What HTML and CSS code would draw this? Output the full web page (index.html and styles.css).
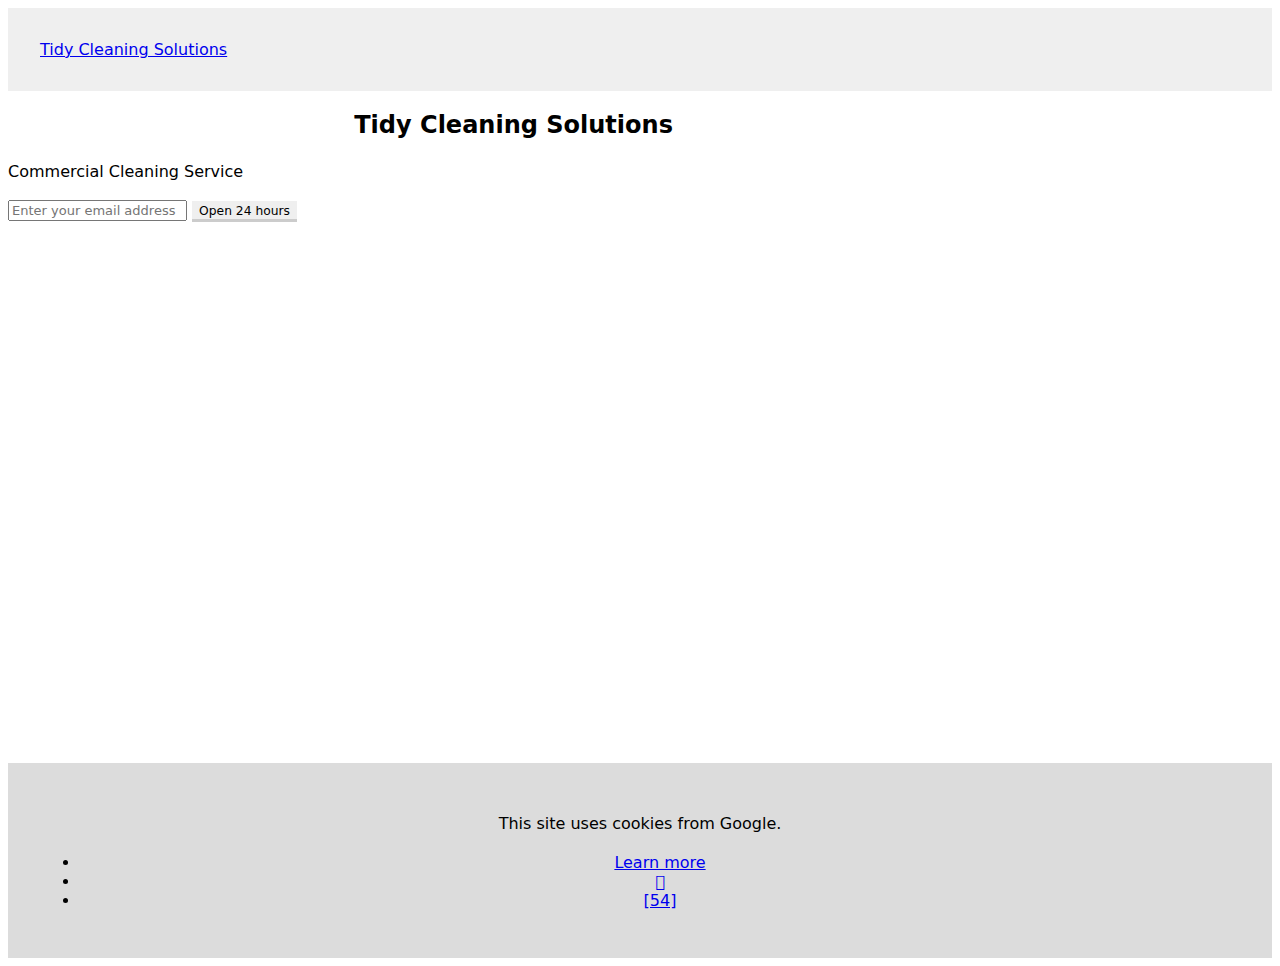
FILE: index.html
```html
<!DOCTYPE html>
<html lang="en">
<head>
<meta charset="utf-8">
<title>Tidy Cleaning Solutions</title>
<link rel="stylesheet" href="styles.css">
</head>
<body>
<header class="site-header">
  <a class="brand" href="#">Tidy Cleaning Solutions</a>
</header>
<main class="content">
  <h1 class="title">Tidy Cleaning Solutions</h1>
  <p class="tagline">Commercial Cleaning Service</p>
  <form class="signup">
    <input class="email" type="email" placeholder="Enter your email address">
    <button class="cta" type="button">Open 24 hours</button>
  </form>
</main>
<footer class="site-footer">
  <p class="notice">This site uses cookies from Google.</p>
  <ul class="links">
    <li><a href="#">Learn more</a></li>
    <li><a href="#">&#xE000;</a></li>
    <li><a href="#">[54]</a></li>
  </ul>
</footer>
</body>
</html>
```
FILE: styles.css
```css
html {
  font-family: "DejaVu Sans", sans-serif;
}
body {
  margin: 8px;
  min-height: calc(100vh - 16px);
  display: flex;
  flex-direction: column;
  font-family: "DejaVu Sans", sans-serif;
  font-size: 16px;
}
.site-header {
  background: #efefef;
  padding: 32px;
}
.content {
  flex: 1;
}
.title {
  width: 80%;
  text-align: center;
  font-size: 24px;
  margin: 19.92px 0 23.5px;
}
.tagline {
  margin: 0 0 19px;
}
.signup {
  margin: 0;
}
.email {
  font-family: "DejaVu Sans", sans-serif;
  font-size: 13px;
  width: 179px;
  box-sizing: border-box;
}
.cta {
  font-family: "DejaVu Sans", sans-serif;
  font-size: 12.3px;
  background: #efefef;
  border: none;
  border-bottom: 3px solid #ccc;
  padding: 3px 7px 1px;
  color: #000;
}
.site-footer {
  background: #dcdcdc;
  padding: 32px;
}
.notice {
  text-align: center;
  margin: 19px 0 20px;
}
.links {
  text-align: center;
  margin: 0 0 16px;
  padding-left: 40px;
}
```
